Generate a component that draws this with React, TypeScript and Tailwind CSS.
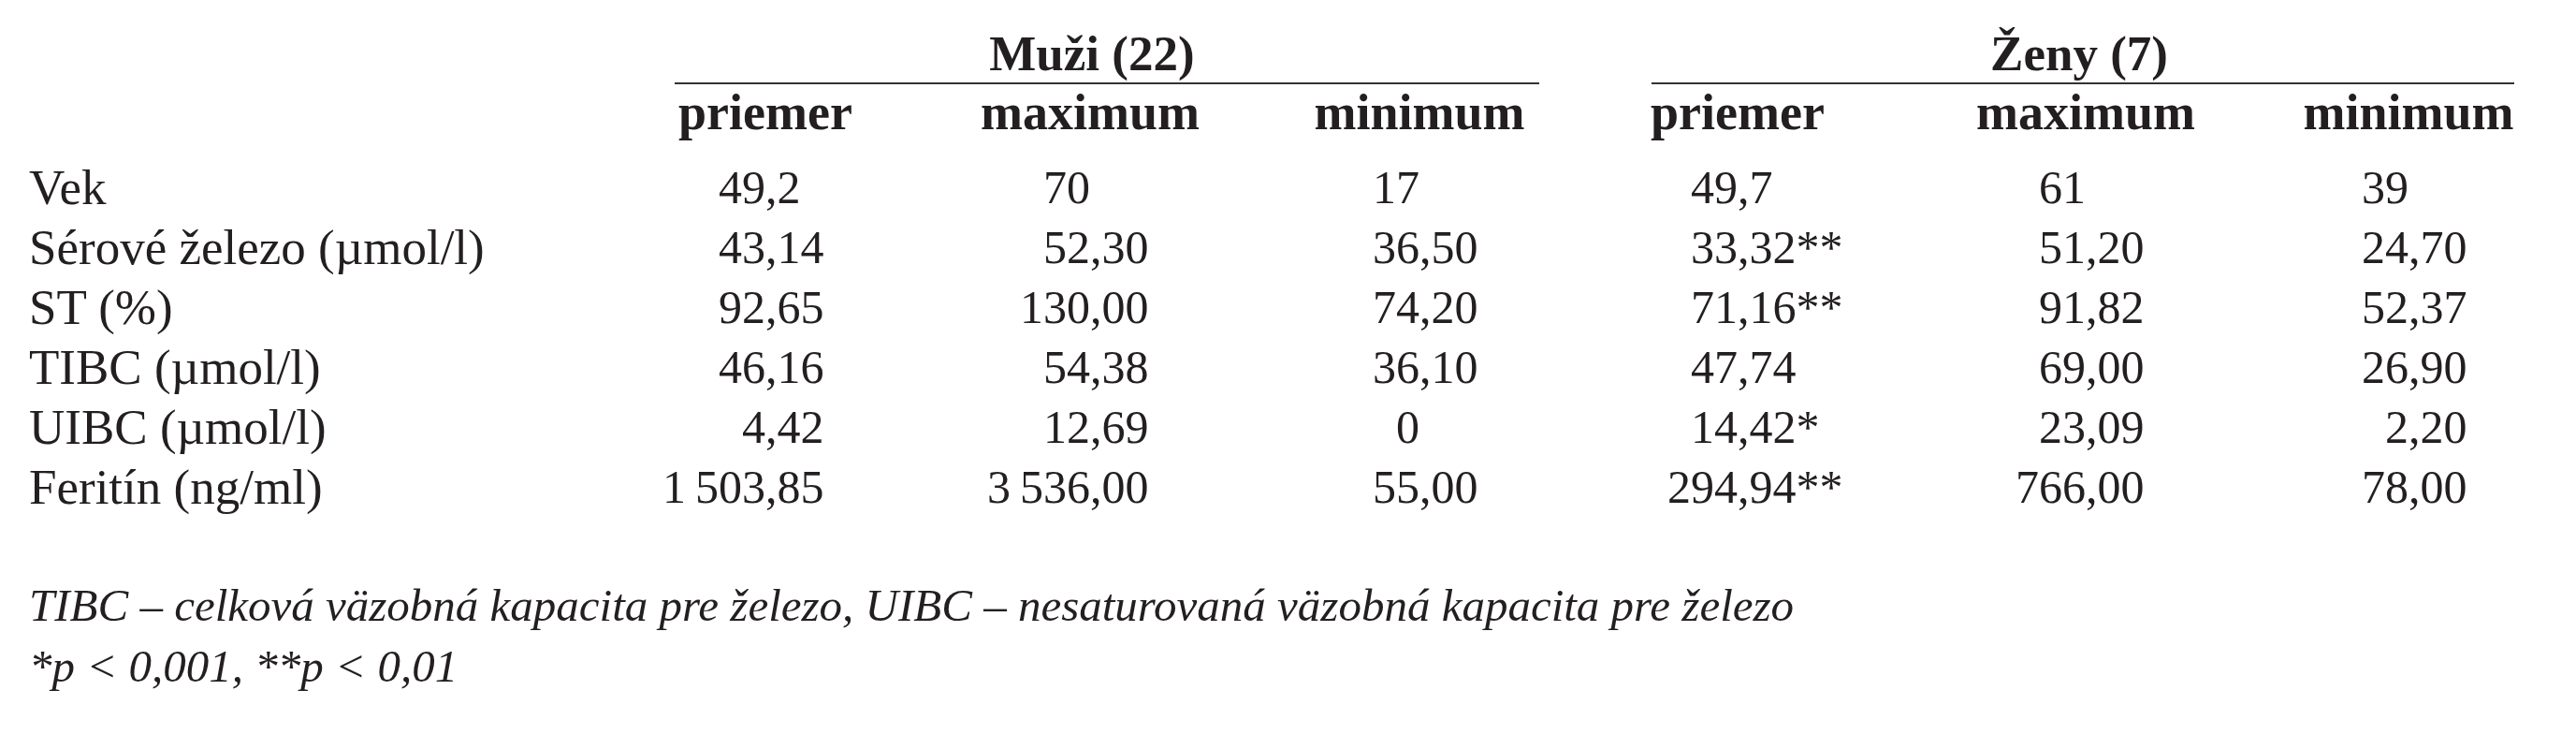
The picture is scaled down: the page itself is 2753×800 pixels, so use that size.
const rows: { label: string; values: string[] }[] = [
  { label: 'Vek', values: ['49,2', '70', '17', '49,7', '61', '39'] },
  { label: 'Sérové železo (µmol/l)', values: ['43,14', '52,30', '36,50', '33,32**', '51,20', '24,70'] },
  { label: 'ST (%)', values: ['92,65', '130,00', '74,20', '71,16**', '91,82', '52,37'] },
  { label: 'TIBC (µmol/l)', values: ['46,16', '54,38', '36,10', '47,74', '69,00', '26,90'] },
  { label: 'UIBC (µmol/l)', values: ['4,42', '12,69', '0', '14,42*', '23,09', '2,20'] },
  { label: 'Feritín (ng/ml)', values: ['1\u2009503,85', '3\u2009536,00', '55,00', '294,94**', '766,00', '78,00'] },
];

const subHeads = ['priemer', 'maximum', 'minimum', 'priemer', 'maximum', 'minimum'];

const colMargins = ['ml-0', 'ml-[7px]', 'ml-[12px]', 'ml-0', 'ml-[32px]', 'ml-[5px]'];

function DecimalCell({ value, margin }: { value: string; margin: string }) {
  const idx = value.indexOf(',');
  const whole = idx === -1 ? value : value.slice(0, idx);
  const rest = idx === -1 ? '' : value.slice(idx);
  return (
    <div className={`flex w-[340px] whitespace-nowrap text-[50px] ${margin}`}>
      <span className="w-1/2 text-right">{whole}</span>
      <span className="w-1/2 text-left">{rest}</span>
    </div>
  );
}

export default function App() {
  return (
    <div className="w-[2753px] h-[800px] bg-white text-[#231f20] text-[50px] font-['Liberation_Serif','DejaVu_Serif',serif]">
      {/* group headers */}
      <div className="flex pt-[26px] text-[53px]">
        <div className="w-[721px]" />
        <div className="w-[924px] h-[64px] leading-[62px] pr-[32px] text-center font-bold border-b-2 border-[#333333]">
          Muži (22)
        </div>
        <div className="w-[120px]" />
        <div className="w-[922px] h-[64px] leading-[62px] pr-[8px] text-center font-bold border-b-2 border-[#333333]">
          Ženy (7)
        </div>
      </div>

      {/* column headers */}
      <div className="flex leading-[60px] text-[54px] font-bold mb-[18px]">
        <div className="w-[648px]" />
        {subHeads.map((h, i) => (
          <div key={i} className={`w-[340px] text-center whitespace-nowrap ${colMargins[i]}`}>
            {h}
          </div>
        ))}
      </div>

      {/* data */}
      <div className="leading-[64px]">
        {rows.map((r) => (
          <div key={r.label} className="flex">
            <div className="w-[648px] pl-[31px] whitespace-nowrap text-[53px]">{r.label}</div>
            {r.values.map((v, i) => (
              <DecimalCell key={i} value={v} margin={colMargins[i]} />
            ))}
          </div>
        ))}
      </div>

      {/* notes */}
      <div className="mt-[62px] pl-[31px] italic text-[49px] leading-[65px]">
        <p>TIBC – celková väzobná kapacita pre železo, UIBC – nesaturovaná väzobná kapacita pre železo</p>
        <p>*p &lt; 0,001, **p &lt; 0,01</p>
      </div>
    </div>
  );
}
